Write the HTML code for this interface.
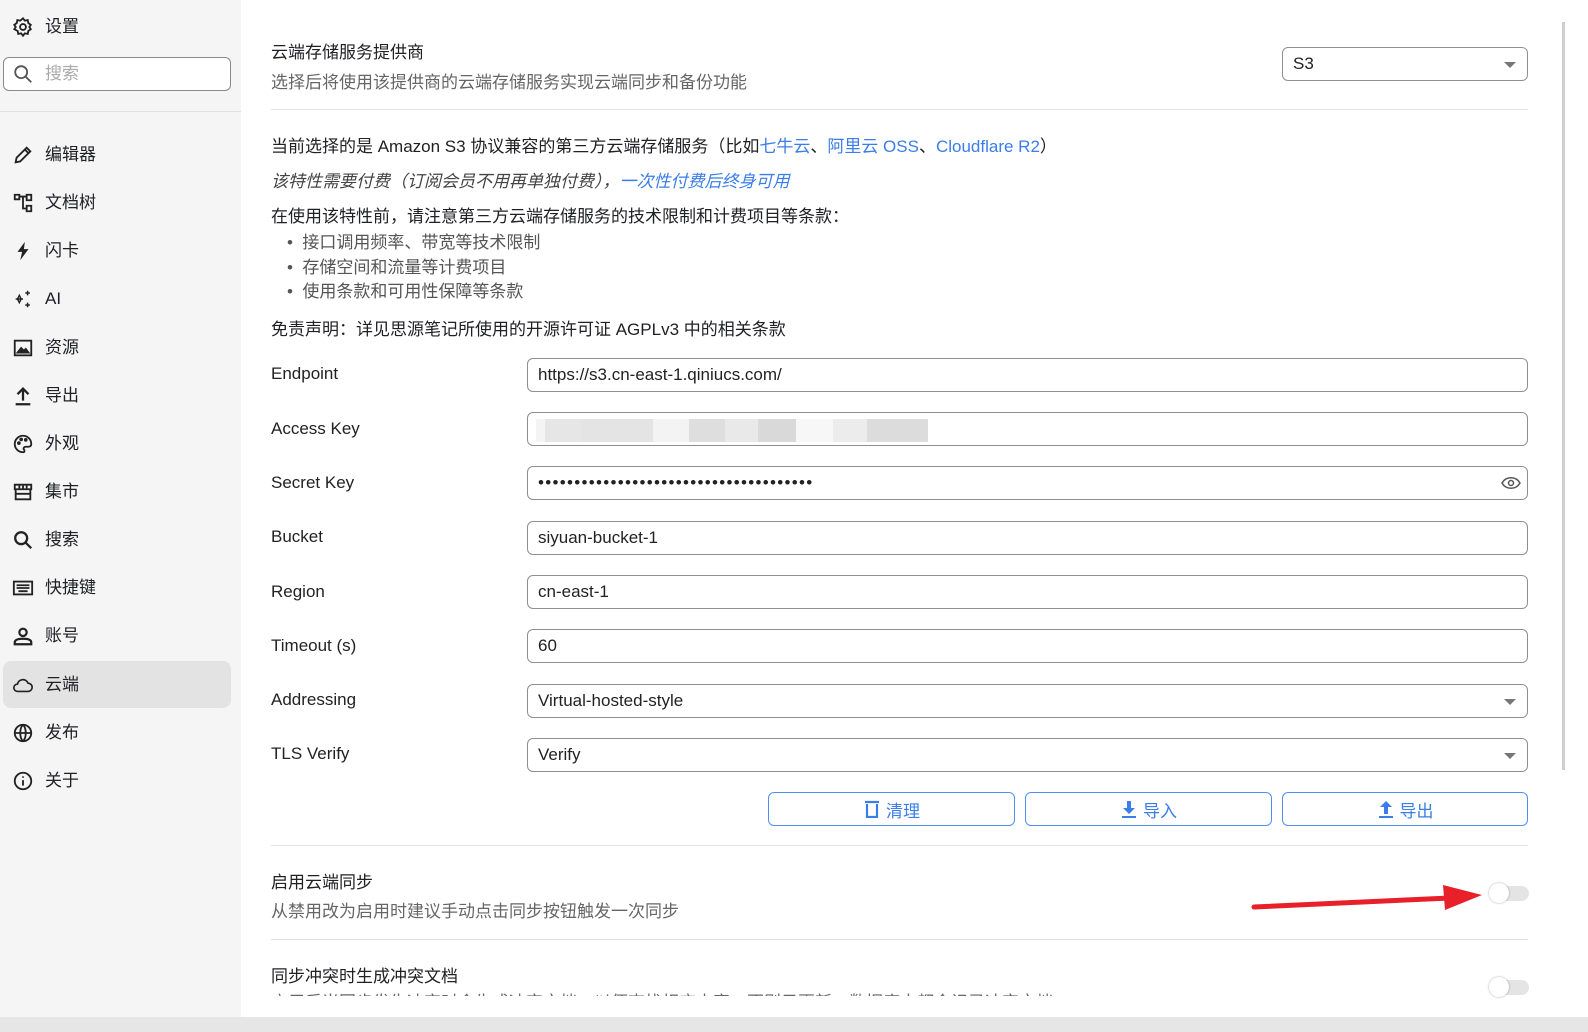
<!DOCTYPE html>
<html><head><meta charset="utf-8"><style>
*{box-sizing:border-box;margin:0;padding:0}
body{width:1588px;height:1032px;overflow:hidden;background:#fff;font-family:"Liberation Sans","Noto Sans CJK SC",sans-serif;color:#202124;position:relative}
.side{position:absolute;left:0;top:0;width:241px;height:1032px;background:#f5f5f5}
.a{position:absolute;white-space:nowrap}
.nav{position:absolute;left:12px;font-size:17px;height:24px;line-height:24px;display:flex;align-items:center}
.nav svg{width:22px;height:22px;margin-right:11px;fill:none;stroke:#222;stroke-width:2}
.sel{position:absolute;left:3px;top:661px;width:228px;height:47px;background:#e3e3e3;border-radius:8px}
.lbl{position:absolute;left:271px;font-size:17px;color:#222}
.inp{position:absolute;left:527px;width:1001px;height:34px;border:1px solid #8f8f8f;border-radius:6px;font-size:17px;line-height:32px;padding-left:10px;color:#222}
.arr{position:absolute;right:11px;top:14px;border-left:6px solid transparent;border-right:6px solid transparent;border-top:6px solid #777}
.btn{position:absolute;top:792px;height:34px;width:247px;border:1px solid #4f8ff2;border-radius:6px;color:#3b7de9;font-size:17px;display:flex;align-items:center;justify-content:center}
.btn svg{width:18px;height:18px;margin-right:5px}
.hr{position:absolute;left:271px;width:1257px;height:1px;background:#e2e2e2}
.tog{position:absolute;left:1489px;width:40px;height:20px}
.tog .t{position:absolute;left:6px;top:3px;width:34px;height:15px;background:#e4e4e4;border-radius:8px}
.tog .k{position:absolute;left:0;top:0;width:20px;height:20px;background:#fff;border-radius:50%;box-shadow:0 0 2px rgba(0,0,0,.35)}
a{color:#3b7de9;text-decoration:none}
</style></head><body>
<div class="side">
 <div class="nav" style="top:15px"><svg viewBox="0 0 24 24"><circle cx="12" cy="12" r="3.2"/><path d="M12 2.5l2 2.6 3.2-.6.6 3.2 2.7 1.9-1.6 2.4 1.6 2.4-2.7 1.9-.6 3.2-3.2-.6-2 2.6-2-2.6-3.2.6-.6-3.2L2.5 14.4 4.1 12 2.5 9.6l2.7-1.9.6-3.2 3.2.6z"/></svg>设置</div>
 <div class="a" style="left:3px;top:57px;width:228px;height:34px;border:1px solid #8a8a8a;border-radius:6px;background:#fff"></div>
 <div class="nav" style="top:62px;color:#aaa"><svg viewBox="0 0 24 24" style="stroke:#555"><circle cx="10" cy="10" r="6.5"/><path d="M15 15l6 6"/></svg>搜索</div>
 <div class="a" style="left:0;top:111px;width:241px;height:1px;background:#e0e0e0"></div>
 <div class="sel"></div>
 <div class="nav" style="top:143px"><svg viewBox="0 0 24 24"><path d="M4 20l1-5L16 4l4 4L9 19z M14 6l4 4"/></svg>编辑器</div>
 <div class="nav" style="top:191px"><svg viewBox="0 0 24 24"><path d="M3 3h5v5H3z M16 3h5v6h-5z M16 15h5v6h-5z M8 5h8 M12 5v13h4"/></svg>文档树</div>
 <div class="nav" style="top:239px"><svg viewBox="0 0 24 24" style="fill:#222;stroke:none"><path d="M14 2L6 13h5l-2 9 9-12h-5z"/></svg>闪卡</div>
 <div class="nav" style="top:287px"><svg viewBox="0 0 24 24" style="stroke-width:1.6"><path d="M8 8l2 4-2 4-2-4z M4 12h8 M17 3v5 M14.5 5.5h5 M17 16v5 M14.5 18.5h5"/></svg>AI</div>
 <div class="nav" style="top:336px"><svg viewBox="0 0 24 24"><rect x="3" y="4" width="18" height="16"/><path d="M6 17l4-5 3 3 2-2 3 4z" style="fill:#222"/></svg>资源</div>
 <div class="nav" style="top:384px"><svg viewBox="0 0 24 24" style="stroke-width:2.5"><path d="M4 21h16 M12 17V4 M6 10l6-6 6 6"/></svg>导出</div>
 <div class="nav" style="top:432px"><svg viewBox="0 0 24 24"><path d="M12 3a9 9 0 100 18c2 0 2-2 1-3s0-3 2-3h3c2 0 3-1 3-3 0-5-4-9-9-9z"/><circle cx="7.5" cy="11" r="1" fill="#222"/><circle cx="10" cy="7" r="1" fill="#222"/><circle cx="15" cy="7.5" r="1" fill="#222"/></svg>外观</div>
 <div class="nav" style="top:480px"><svg viewBox="0 0 24 24"><path d="M3 4h18v5H3z M4 9v11h16V9 M8 4v5 M12 4v5 M16 4v5 M4 14h16"/></svg>集市</div>
 <div class="nav" style="top:528px"><svg viewBox="0 0 24 24" style="stroke-width:2.5"><circle cx="10" cy="10" r="6.5"/><path d="M15 15l6 6"/></svg>搜索</div>
 <div class="nav" style="top:576px"><svg viewBox="0 0 24 24"><rect x="2" y="5" width="20" height="14"/><path d="M5 9h14 M5 12h14 M7 15.5h10"/></svg>快捷键</div>
 <div class="nav" style="top:624px"><svg viewBox="0 0 24 24" style="stroke-width:2.4"><circle cx="12" cy="8" r="4"/><path d="M3 21v-2c0-3 4-4 9-4s9 1 9 4v2z"/></svg>账号</div>
 <div class="nav" style="top:673px"><svg viewBox="0 0 24 24" style="stroke-width:1.8"><path d="M6 19a4 4 0 010-8 6 6 0 0111.5-1A4.5 4.5 0 0117.5 19z"/></svg>云端</div>
 <div class="nav" style="top:721px"><svg viewBox="0 0 24 24"><circle cx="12" cy="12" r="9"/><path d="M3 12h18 M12 3c-4 4-4 14 0 18 M12 3c4 4 4 14 0 18"/></svg>发布</div>
 <div class="nav" style="top:769px"><svg viewBox="0 0 24 24"><circle cx="12" cy="12" r="9"/><path d="M12 11v6 M12 7v1.5"/></svg>关于</div>
</div>

<div class="a" style="left:271px;top:38px;font-size:17px">云端存储服务提供商</div>
<div class="a" style="left:271px;top:68px;font-size:17px;color:#666">选择后将使用该提供商的云端存储服务实现云端同步和备份功能</div>
<div class="inp" style="left:1282px;width:246px;top:47px">S3<div class="arr"></div></div>
<div class="hr" style="top:109px"></div>

<div class="a" style="left:271px;top:132px;font-size:17px">当前选择的是 Amazon S3 协议兼容的第三方云端存储服务（比如<a>七牛云</a>、<a>阿里云 OSS</a>、<a>Cloudflare R2</a>）</div>
<div class="a" style="left:271px;top:167px;font-size:17px;font-style:italic;color:#444">该特性需要付费（订阅会员不用再单独付费），<a>一次性付费后终身可用</a></div>
<div class="a" style="left:271px;top:202px;font-size:17px">在使用该特性前，请注意第三方云端存储服务的技术限制和计费项目等条款：</div>
<div class="a" style="left:287px;top:231px;font-size:17px;color:#555;line-height:24.5px">•&nbsp;&nbsp;接口调用频率、带宽等技术限制<br>•&nbsp;&nbsp;存储空间和流量等计费项目<br>•&nbsp;&nbsp;使用条款和可用性保障等条款</div>
<div class="a" style="left:271px;top:315px;font-size:17px">免责声明：详见思源笔记所使用的开源许可证 AGPLv3 中的相关条款</div>

<div class="lbl" style="top:364px">Endpoint</div><div class="inp" style="top:358px">https://s3.cn-east-1.qiniucs.com/</div>
<div class="lbl" style="top:419px">Access Key</div><div class="inp" style="top:412px;padding:0">
 <div class="a" style="left:8px;top:6px;width:392px;height:23px;background:linear-gradient(90deg,#f4f4f4 0 9px,#e6e6e6 9px 45px,#e4e4e4 45px 117px,#f3f3f3 117px 153px,#dedede 153px 189px,#e9e9e9 189px 222px,#d9d9d9 222px 260px,#f7f7f7 260px 297px,#ececec 297px 331px,#dcdcdc 331px 392px)"></div></div>
<div class="lbl" style="top:473px">Secret Key</div><div class="inp" style="top:466px;letter-spacing:1.3px">••••••••••••••••••••••••••••••••••••••
 <svg class="a" style="right:6px;top:8px" width="20" height="16" viewBox="0 0 20 16" fill="none" stroke="#555" stroke-width="1.5"><path d="M1 8c4-7 14-7 18 0-4 7-14 7-18 0z"/><circle cx="10" cy="8" r="2.5"/></svg></div>
<div class="lbl" style="top:527px">Bucket</div><div class="inp" style="top:521px">siyuan-bucket-1</div>
<div class="lbl" style="top:582px">Region</div><div class="inp" style="top:575px">cn-east-1</div>
<div class="lbl" style="top:636px">Timeout (s)</div><div class="inp" style="top:629px">60</div>
<div class="lbl" style="top:690px">Addressing</div><div class="inp" style="top:684px">Virtual-hosted-style<div class="arr"></div></div>
<div class="lbl" style="top:744px">TLS Verify</div><div class="inp" style="top:738px">Verify<div class="arr"></div></div>

<div class="btn" style="left:768px"><svg viewBox="0 0 18 18" fill="none" stroke="#3b7de9" stroke-width="2.2"><path d="M2 2h14 M4 4v13h10V4"/></svg>清理</div>
<div class="btn" style="left:1025px"><svg viewBox="0 0 18 18" fill="#3b7de9"><path d="M7 1h4v7h4l-6 6-6-6h4z M2 16h14v2H2z"/></svg>导入</div>
<div class="btn" style="left:1282px;width:246px"><svg viewBox="0 0 18 18" fill="#3b7de9"><path d="M7 14h4V7h4L9 1 3 7h4z M2 16h14v2H2z"/></svg>导出</div>

<div class="hr" style="top:845px"></div>
<div class="a" style="left:271px;top:868px;font-size:17px">启用云端同步</div>
<div class="a" style="left:271px;top:897px;font-size:17px;color:#666">从禁用改为启用时建议手动点击同步按钮触发一次同步</div>
<div class="tog" style="top:883px"><div class="t"></div><div class="k"></div></div>
<svg class="a" style="left:1250px;top:882px" width="235" height="30" viewBox="0 0 235 30"><path d="M4 25L200 16" stroke="#e8202a" stroke-width="5" stroke-linecap="round"/><path d="M193 3L232 13 195 28z" fill="#e8202a"/></svg>
<div class="hr" style="top:939px"></div>
<div class="a" style="left:271px;top:962px;font-size:17px">同步冲突时生成冲突文档</div>
<div class="a" style="left:271px;top:988px;height:8px;overflow:hidden;font-size:17px;color:#666">启用后当同步发生冲突时会生成冲突文档，以便查找相应内容；否则只更新，数据库中都会记录冲突文档</div>
<div class="tog" style="top:977px"><div class="t"></div><div class="k"></div></div>

<div class="a" style="left:1562px;top:22px;width:3px;height:748px;background:#cfcfcf"></div>
<div class="a" style="left:0;top:1017px;width:1588px;height:15px;background:#e6e6e6"></div>
</body></html>
